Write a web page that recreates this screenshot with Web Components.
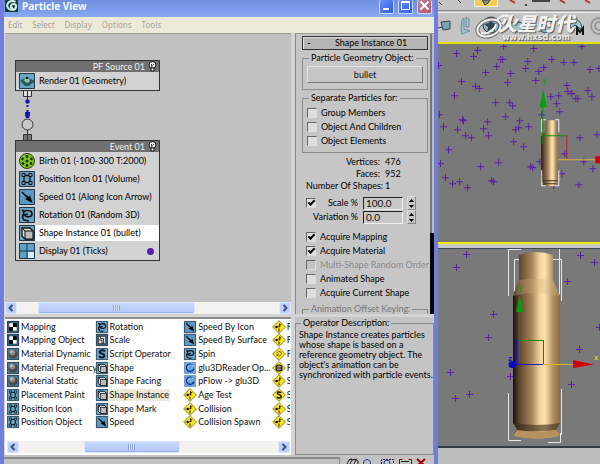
<!DOCTYPE html>
<html lang="en">
<head>
<meta charset="utf-8">
<title>Particle View</title>
<style>
  html, body { height: 100%; }

  body {
    margin: 0;
    overflow: hidden;
    background: #c2c2c2;
    color: #000;
    font: 9px/12px Lato, sans-serif;
  }
</style>
</head>
<body>
<particle-app></particle-app>

<script>
const ICONS = {
  teapot: `<path fill="#69a3c8" d="M0 0h16v16H0z"/><path fill="#255b5c" d="M3 7c0-2 10-2 10 0 3-1 3 3-1 4-2 3-6 3-8 0C1 9 1 6 3 7z"/><path fill="#91c5b4" d="M5 7c2-2 5-1 6 0-1 3-4 4-6 0z"/><path d="M7 4h2v2H7z"/>`,
  birth: `<circle cx="8" cy="8" r="7.5" fill="#7fc41c" stroke="#26400c"/><g fill="#183804"><circle cx="8" cy="8" r="1.5"/><circle cx="8" cy="3.5" r="1.4"/><circle cx="8" cy="12.5" r="1.4"/><circle cx="3.5" cy="6" r="1.4"/><circle cx="12.5" cy="6" r="1.4"/><circle cx="4" cy="10.5" r="1.4"/><circle cx="12" cy="10.5" r="1.4"/></g>`,
  position: `<path fill="#69a3c8" d="M0 0h16v16H0z"/><path fill="none" stroke="#111" stroke-width="1.3" d="M5 4v8M11 4v8M4 4.500h8M4 11.500h8"/><path fill="#69a3c8" stroke="#111" d="M3 2.500h3v3H3zM10 2.500h3v3h-3zM3 10.500h3v3H3zM10 10.500h3v3h-3z"/>`,
  speed: `<path fill="#5d98c0" d="M0 0h16v16H0z"/><path stroke="#111" stroke-width="1.600" d="M3 3l5 5"/><path d="M13.500 14L6 10l2-1-1-3 3 2 1-2z"/>`,
  rotation: `<path fill="#69a3c8" d="M0 0h16v16H0z"/><path fill="none" stroke="#111" stroke-width="1.600" d="M4 6c2-4 9-3 9 1 0 3-5 4-8 1l4-1M5 6c-2 3-2 5 0 7l5 1M3 3l3 2"/>`,
  shape: `<path fill="#69a3c8" d="M0 0h16v16H0z"/><path fill="#ddd" stroke="#111" stroke-width="1.300" d="M3 3h8l3 3v8H6l-3-3z"/><path fill="#bbb" stroke="#111" d="M6 6h8v8H6zM3 3l3 3"/>`,
  display: `<path fill="#5f9fc8" d="M0 0h16v16H0z"/><path fill="#d7edf8" d="M9 9h6v6H9z"/><path stroke="#183950" d="M8 0v16M0 8h16"/>`,
  mapping: `<path fill="#335d75" d="M0 0h16v16H0z"/><path d="M3 3h10v10H3z"/><path fill="#fff" d="M3 3h5v5H3zM8 8h5v5H8z"/>`,
  material: `<path fill="#4b7995" d="M0 0h16v16H0z"/><circle cx="8" cy="8" r="6" fill="#484848"/><circle cx="7" cy="6" r="4" fill="#888"/><circle cx="6" cy="5" r="2" fill="#bbb"/>`,
  scale: `<path fill="#456f88" d="M0 0h16v16H0z"/><path fill="#ddd" stroke="#111" d="M3 3h10v10H3z"/><path stroke="#111" fill="none" d="M3 8h5v5M6 3v3h4v7"/>`,
  script: `<path fill="#69a3c8" d="M0 0h16v16H0z"/><path fill="none" stroke="#111" stroke-width="2.500" d="M12 4.500C9 2 4 3 5 6c1 2 6 1 6 4 0 4-5 3-7 1"/>`,
  glu: `<path fill="#6ca3dc" d="M0 0h16v16H0z"/><path fill="none" stroke="#1b2b8c" stroke-width="2" d="M11 4C6 1 2 6 4 10c2 4 8 3 9-1"/><path fill="none" stroke="#dceaff" d="M12 5C8 2 4 6 5 9"/>`,
  test: `<path fill="#ffe51e" stroke="#6f6200" d="M8-.500L16.500 8 8 16.500-.500 8z"/><path fill="none" stroke="#111" stroke-width="1.300" d="M8 10v4M2 8h5M9 3L8 8l2-1M9 5h2"/><path d="M4 6l3 2-3 2z"/>`,
  spinTest: `<path fill="#ffe51e" stroke="#6f6200" d="M8-.500L16.500 8 8 16.500-.500 8z"/><path fill="none" stroke="#654" stroke-width="1.300" d="M5 7c2-4 7-2 6 1s-5 4-6 1l3-1"/>`,
  goTest: `<path fill="#ffe51e" stroke="#6f6200" d="M8-.500L16.500 8 8 16.500-.500 8z"/><circle cx="8" cy="8" r="4" fill="#999" stroke="#111" stroke-width="1.500"/><path stroke="#111" d="M4 8h8"/>`,
  scriptTest: `<path fill="#ffe51e" stroke="#6f6200" d="M8-.500L16.500 8 8 16.500-.500 8z"/><path fill="none" stroke="#111" stroke-width="2" d="M11 5C8 3 5 4 6 6c1 2 5 1 5 4-1 3-4 2-6 1"/>`
};

class OpIcon extends HTMLElement {
  connectedCallback() {
    const kind = this.getAttribute("kind");
    const round = /birth|glu|test/i.test(kind);
    this.attachShadow({ mode: "open" }).innerHTML = /* html */`
    <style>
      :host { display: block; flex: none; width: var(--icon, 12px); height: var(--icon, 12px); }
      svg { display: block; width: 100%; height: 100%; overflow: visible; }
    </style>
    <svg viewBox="0 0 16 16" aria-hidden="true">${ICONS[kind]}
      ${round ? "" : `<path fill="none" stroke="#23384a" d="M.5.5h15v15H.5z"/>`}
    </svg>`;
  }
}

class TitleBar extends HTMLElement {
  connectedCallback() {
    this.attachShadow({ mode: "open" }).innerHTML = /* html */`
    <style>
      :host {
        display: flex;
        flex: none;
        align-items: flex-start;
        gap: 4px;
        height: 17px;
        padding: 0 2px 0 1px;
        box-sizing: border-box;
        background: linear-gradient(#718fdd, #7c9ceb 60%, #8aaaf0);
        color: #f4f7ff;
      }
      .logo { width: 13px; height: 12px; }
      h1 { flex: 1; margin: 0; font: bold 10px/13px "Noto Sans", sans-serif; }
      button {
        width: 15px;
        height: 14px;
        padding: 0;
        border: 1px solid #cbd8fb;
        border-top: 0;
        border-radius: 2px;
        background: linear-gradient(135deg, #6b92f5, #2d5be0);
      }
      button.close { background: linear-gradient(135deg, #c98795, #a8546a); }
      button svg { display: block; width: 13px; height: 13px; fill: none; stroke: #fff; }
    </style>
    <svg class="logo" viewBox="0 0 13 12"><path fill="#163f3a" d="M0 0h13v12H0z"/><path fill="none" stroke="#cfeee2" stroke-width="2" d="M10.500 2C6-1 1 3 2.500 7s8 3.500 8.500 0-4-4-5-1.500 1 2.500 2 2"/></svg>
    <h1><slot></slot></h1>
    <button aria-label="Minimize"><svg viewBox="0 0 13 13"><path stroke-width="2" d="M3 9h6"/></svg></button>
    <button aria-label="Maximize"><svg viewBox="0 0 13 13"><path d="M2.500 2.500h8v7h-8z"/><path stroke-width="2" d="M2 2h9"/></svg></button>
    <button class="close" aria-label="Close"><svg viewBox="0 0 13 13"><path stroke-width="2" d="M2.500 1.500l8 8M10.500 1.500l-8 8"/></svg></button>`;
  }
}

class MenuBar extends HTMLElement {
  connectedCallback() {
    const items = ["Edit", "Select", "Display", "Options", "Tools"];
    this.attachShadow({ mode: "open" }).innerHTML = /* html */`
    <style>
      :host {
        display: flex;
        flex: none;
        gap: 10px;
        height: 16px;
        box-sizing: border-box;
        padding: 0 4px;
        background: #ece9d8;
      }
      button {
        padding: 0;
        border: 0;
        background: none;
        color: #a9a696;
        font: 8px/14px "Noto Sans", sans-serif;
      }
    </style>
    ${items.map(item => `<button>${item}</button>`).join("")}`;
  }
}

class EventNode extends HTMLElement {
  connectedCallback() {
    this.attachShadow({ mode: "open" }).innerHTML = /* html */`
    <style>
      :host { display: block; border: 1px solid #333; background: #d2d2d2; }
      header {
        display: flex;
        justify-content: flex-end;
        align-items: center;
        gap: 3px;
        height: 11px;
        padding-right: 2px;
        background: #707070;
        color: #eee;
      }
      svg { width: 9px; height: 11px; }
    </style>
    <header>
      <span>${this.getAttribute("heading")}</span>
      <svg viewBox="0 0 9 11"><circle cx="4.500" cy="4" r="3.500" fill="#eee" stroke="#111"/><path fill="#fff" stroke="#111" d="M3 7h3v3H3z"/><path stroke="#333" d="M3 3l1 1v3M6 3L5 4"/></svg>
    </header>
    <slot></slot>`;
  }
}

class NodeRow extends HTMLElement {
  connectedCallback() {
    this.attachShadow({ mode: "open" }).innerHTML = /* html */`
    <style>
      :host { display: flex; align-items: center; height: 18px; padding-left: 3px; --icon: 16px; }
      span { flex: 1; height: 16px; padding-left: 4px; line-height: 16px; white-space: nowrap; }
      :host([selected]) span { background: #fff; }
      i { width: 7px; height: 7px; margin-right: 5px; border-radius: 50%; background: #5a1cb4; }
    </style>
    <op-icon kind="${this.getAttribute("kind")}"></op-icon>
    <span><slot></slot></span>
    ${this.hasAttribute("dot") ? "<i></i>" : ""}`;
  }
}

class ScrollStrip extends HTMLElement {
  connectedCallback() {
    this.attachShadow({ mode: "open" }).innerHTML = /* html */`
    <style>
      :host { display: flex; flex: none; height: 12px; background: #f3f2ee; }
      button {
        width: 12px;
        padding: 0;
        border: 1px solid #dce6fd;
        border-radius: 2px;
        background: #bdcffa;
      }
      button svg { display: block; width: 10px; height: 10px; fill: none; stroke: #3c5080; stroke-width: 2; }
      .track { flex: 1; display: flex; }
      .thumb {
        display: grid;
        place-items: center;
        width: var(--thumb);
        margin-left: var(--start);
        border: 1px solid #dce6fd;
        border-radius: 2px;
        box-sizing: border-box;
        background: linear-gradient(#c8d8fd, #b4c8f8);
        box-shadow: inset 0 -1px #98b0e8;
      }
      .thumb i { width: 7px; height: 6px; background: repeating-linear-gradient(90deg, #8ba5e0 0 1px, #dfe8ff 1px 2px); }
    </style>
    <button aria-label="Scroll left"><svg viewBox="0 0 10 10"><path d="M6.500 2L3.500 5l3 3"/></svg></button>
    <div class="track"><div class="thumb"><i></i></div></div>
    <button aria-label="Scroll right"><svg viewBox="0 0 10 10"><path d="M3.500 2l3 3-3 3"/></svg></button>`;
  }
}

class EventGraph extends HTMLElement {
  connectedCallback() {
    this.attachShadow({ mode: "open" }).innerHTML = /* html */`
    <style>
      :host { display: flex; flex-direction: column; min-height: 0; background: #c1c1c1; }
      .canvas { flex: 1; min-height: 0; padding: 27px 10px 0; overflow: hidden; box-shadow: inset 0 1px #999; }
      event-node { width: 143px; }
      .wire { display: block; width: 24px; height: 49px; }
      scroll-strip { --start: 8%; --thumb: 60%; }
    </style>
    <div class="canvas">
      <event-node heading="PF Source 01">
        <node-row kind="teapot">Render 01 (Geometry)</node-row>
      </event-node>
      <svg class="wire" viewBox="0 0 24 49">
        <path fill="#ddd" stroke="#333" d="M8.500 0v5.500h8V0"/>
        <path fill="#777" stroke="#333" d="M8.500 49v-5.500h8V49"/>
        <path stroke="#333" d="M12.500 0v9M12.500 39v10"/>
        <path stroke="#1515b0" stroke-width="2" stroke-dasharray="2 3" d="M12.500 9v14"/>
        <circle cx="12.500" cy="10.500" r="2.300" fill="#1515b0"/>
        <path fill="#1515b0" d="M10 21h5v3l-1 3h-3l-1-3z"/>
        <circle cx="12.500" cy="33.500" r="5.500" fill="#c8c8c8" stroke="#333"/>
      </svg>
      <event-node heading="Event 01">
        <node-row kind="birth">Birth 01 (-100-300 T:2000)</node-row>
        <node-row kind="position">Position Icon 01 (Volume)</node-row>
        <node-row kind="speed">Speed 01 (Along Icon Arrow)</node-row>
        <node-row kind="rotation">Rotation 01 (Random 3D)</node-row>
        <node-row kind="shape" selected>Shape Instance 01 (bullet)</node-row>
        <node-row kind="display" dot>Display 01 (Ticks)</node-row>
      </event-node>
    </div>
    <scroll-strip></scroll-strip>`;
  }
}

class GroupBox extends HTMLElement {
  connectedCallback() {
    this.attachShadow({ mode: "open" }).innerHTML = /* html */`
    <style>
      :host { display: block; }
      fieldset { height: 100%; min-width: 0; margin: 0; padding: var(--pad, 0 4px 5px); border: 1px solid #8a8a8a; box-sizing: border-box; }
      legend { margin-left: 2px; padding: 0 2px; white-space: nowrap; }
    </style>
    <fieldset><legend>${this.getAttribute("label")}</legend><slot></slot></fieldset>`;
  }
}

class CheckRow extends HTMLElement {
  connectedCallback() {
    const has = name => this.hasAttribute(name) ? name : "";
    const label = this.getAttribute("label");
    this.attachShadow({ mode: "open" }).innerHTML = /* html */`
    <style>
      :host { display: block; height: 14px; }
      label { display: flex; align-items: center; gap: 4px; height: 14px; white-space: nowrap; }
      input {
        appearance: none;
        flex: none;
        width: 10px;
        height: 10px;
        margin: 0;
        border: 1px solid;
        border-color: #666 #ddd #ddd #666;
        background: #dedede;
      }
      input:checked::before {
        content: "";
        display: block;
        width: 5px;
        height: 2px;
        margin: 1px 0 0 1px;
        border: solid #000;
        border-width: 0 0 2px 2px;
        rotate: -45deg;
      }
      input:disabled { background: #c3c3c3; }
      input:disabled + span { color: #8b8b8b; }
    </style>
    <label><input type="checkbox" ${label ? `aria-label="${label}"` : ""} ${has("checked")} ${has("disabled")}><span><slot></slot></span></label>`;
  }
}

class SpinField extends HTMLElement {
  connectedCallback() {
    this.attachShadow({ mode: "open" }).innerHTML = /* html */`
    <style>
      :host { display: flex; justify-content: flex-end; align-items: center; flex: 1; height: 14px; }
      label { margin-right: 5px; }
      input {
        width: 40px;
        height: 13px;
        box-sizing: border-box;
        padding: 0 2px;
        border: 1px solid;
        border-color: #222 #eee #eee #222;
        border-radius: 0;
        background: #c8c8c8;
        color: #111;
        font: inherit;
        font-size: 10px;
      }
      div { display: grid; margin-left: 4px; border: 1px solid #999; border-color: #ddd #888 #888 #ddd; }
      button { display: grid; place-items: center; width: 7px; height: 6px; padding: 0; border: 0; background: none; }
      svg { width: 5px; height: 3px; }
    </style>
    <label for="value">${this.getAttribute("label")}</label>
    <input id="value" value="${this.getAttribute("value")}">
    <div>
      <button aria-label="Increase"><svg viewBox="0 0 5 3"><path d="M0 3L2.500 0 5 3z"/></svg></button>
      <button aria-label="Decrease"><svg viewBox="0 0 5 3"><path d="M0 0l2.500 3L5 0z"/></svg></button>
    </div>`;
  }
}

class ParamPanel extends HTMLElement {
  connectedCallback() {
    this.attachShadow({ mode: "open" }).innerHTML = /* html */`
    <style>
      :host {
        display: grid;
        grid-template-columns: minmax(0, 1fr) 4px;
        gap: 1px;
        min-height: 0;
        overflow: hidden;
        border-left: 1px solid #8a8a8a;
        border-top: 1px solid #999;
        box-sizing: border-box;
        background: #c6c6c6;
      }
      .rollout { min-height: 0; overflow: hidden; padding: 2px 1px 0 6px; }
      h2 {
        display: flex;
        height: 14px;
        margin: 0;
        border: 1px solid #333;
        box-sizing: border-box;
        background: #b5b5b5;
        box-shadow: inset 1px 1px #ddd;
        font: inherit;
        text-align: center;
      }
      h2 button { width: 12px; padding: 0; border: 0; background: none; font: inherit; font-weight: bold; }
      h2 span { flex: 1; }
      group-box { margin-top: 2px; }
      .pick {
        width: 100%;
        height: 17px;
        margin: 2px 0 1px;
        padding: 0;
        border: 1px solid;
        border-color: #e2e2e2 #777 #777 #e2e2e2;
        background: #c6c6c6;
        color: #111;
        font: inherit;
      }
      .separate { --pad: 2px 4px 4px; }
      dl {
        display: grid;
        grid-template-columns: 74px 1fr;
        column-gap: 5px;
        margin: 3px 0 4px 4px;
        white-space: nowrap;
      }
      dt { text-align: right; }
      dd { margin: 0; }
      .spin { display: flex; padding: 0 12px 0 4px; }
      .checks { padding: 6px 0 0 4px; }
      .keying { color: #777; margin-top: 3px; height: 30px; }
      .bar { display: flex; flex-direction: column; background: linear-gradient(90deg, #777 2px, #bbb 2px); }
      .bar i { margin-top: auto; height: 29%; background: #050505; }
    </style>
    <div class="rollout">
      <h2><button>-</button><span>Shape Instance 01</span></h2>
      <group-box label="Particle Geometry Object:"><button class="pick">bullet</button></group-box>
      <group-box class="separate" label="Separate Particles for:">
        <check-row>Group Members</check-row>
        <check-row>Object And Children</check-row>
        <check-row>Object Elements</check-row>
      </group-box>
      <dl>
        <dt>Vertices:</dt><dd>476</dd>
        <dt>Faces:</dt><dd>952</dd>
        <dt>Number Of Shapes:</dt><dd>1</dd>
      </dl>
      <div class="spin"><check-row label="Use scale" checked></check-row><spin-field label="Scale %" value="100.0"></spin-field></div>
      <div class="spin"><spin-field label="Variation %" value="0.0"></spin-field></div>
      <div class="checks">
        <check-row checked>Acquire Mapping</check-row>
        <check-row checked>Acquire Material</check-row>
        <check-row disabled>Multi-Shape Random Order</check-row>
        <check-row>Animated Shape</check-row>
        <check-row>Acquire Current Shape</check-row>
      </div>
      <group-box class="keying" label="Animation Offset Keying:"></group-box>
    </div>
    <div class="bar"><i></i></div>`;
  }
}

class OperatorDepot extends HTMLElement {
  connectedCallback() {
    const columns = [
      [["mapping", "Mapping"], ["mapping", "Mapping Object"], ["material", "Material Dynamic"], ["material", "Material Frequency"],
       ["material", "Material Static"], ["position", "Placement Paint"], ["position", "Position Icon"], ["position", "Position Object"]],
      [["rotation", "Rotation"], ["scale", "Scale"], ["script", "Script Operator"], ["shape", "Shape"],
       ["shape", "Shape Facing"], ["shape", "Shape Instance"], ["shape", "Shape Mark"], ["speed", "Speed"]],
      [["speed", "Speed By Icon"], ["speed", "Speed By Surface"], ["rotation", "Spin"], ["glu", "glu3DReader Op..."],
       ["glu", "pFlow -> glu3D"], ["test", "Age Test"], ["test", "Collision"], ["test", "Collision Spawn"]],
      [["test", "F"], ["test", "F"], ["spinTest", "F"], ["goTest", "F"],
       ["test", "S"], ["scriptTest", "S"], ["test", "S"], ["test", "S"]]
    ];
    const item = ([kind, name]) => `
      <button class="${name === "Shape Instance" ? "current" : ""}"><op-icon kind="${kind}"></op-icon><span>${name}</span></button>`;
    this.attachShadow({ mode: "open" }).innerHTML = /* html */`
    <style>
      :host {
        display: flex;
        flex-direction: column;
        min-height: 0;
        padding: 1px 1px 0 2px;
        border-top: 2px solid #8c8c8c;
        box-sizing: border-box;
        background: #fff;
      }
      .columns {
        flex: 1;
        display: grid;
        grid-template-columns: repeat(3, 31.3%) 1fr;
        min-height: 0;
        padding-bottom: 12px;
        overflow: hidden;
      }
      .columns div { display: flex; flex-direction: column; min-width: 0; min-height: 0; }
      button {
        flex: 1;
        display: flex;
        align-items: center;
        gap: 1px;
        min-height: 0;
        padding: 0;
        border: 0;
        background: none;
        color: #111;
        font: inherit;
        white-space: nowrap;
      }
      span { padding: 0 1px; }
      .current span { background: #ece9d8; }
      scroll-strip { --start: 25%; --thumb: 37%; margin-bottom: 2px; }
    </style>
    <div class="columns">${columns.map(col => `<div>${col.map(item).join("")}</div>`).join("")}</div>
    <scroll-strip></scroll-strip>`;
  }
}

class StatusStrip extends HTMLElement {
  connectedCallback() {
    this.attachShadow({ mode: "open" }).innerHTML = /* html */`
    <style>
      :host { display: flex; flex: none; justify-content: space-between; height: 9px; background: #c2c2c2; overflow: hidden; }
      div { width: 78%; margin-top: 2px; border: solid #888; border-width: 2px 1px 0 0; }
      svg { width: 84px; height: 9px; margin-right: 5px; }
    </style>
    <div></div>
    <svg viewBox="0 0 84 9" fill="none" stroke="#222">
      <path d="M2 9l2-4 3-1M5 9l2-4 3-1M9 9l2-4 2 1v4M4 5l2-1 3 1 3-1"/>
      <circle cx="22" cy="8" r="3.500" stroke="#2a3a90"/>
      <path stroke-dasharray="2 1" d="M36.500 9V4.500h12V9"/><circle cx="42" cy="8" r="3" stroke="#2a3a90"/>
      <path stroke="#900" d="M54.500 9V4.500h3M66.500 9V4.500h-3"/><path d="M56 6.500h8"/>
      <path stroke="#a00" stroke-width="2" d="M72 4l8 7M80 4l-8 7"/>
    </svg>`;
  }
}

class ParticleWindow extends HTMLElement {
  connectedCallback() {
    this.attachShadow({ mode: "open" }).innerHTML = /* html */`
    <style>
      :host {
        display: flex;
        flex-direction: column;
        min-height: 0;
        border: solid #6f7ddc;
        border-width: 0 4px;
        box-sizing: border-box;
      }
      main {
        flex: 1;
        display: grid;
        grid-template: minmax(0, 281fr) minmax(0, 138fr) / minmax(0, 286fr) minmax(0, 139fr);
        gap: 3px 4px;
        min-height: 0;
        padding-left: 1px;
        background: #d4d4d4;
      }
      .about { min-height: 0; --pad: 1px 0 0 3px; background: #c4c4c4; }
      p { margin: 0; line-height: 10px; }
      group-box { height: 100%; }
    </style>
    <title-bar>Particle View</title-bar>
    <menu-bar></menu-bar>
    <main>
      <event-graph></event-graph>
      <param-panel></param-panel>
      <operator-depot></operator-depot>
      <div class="about">
        <group-box label="Operator Description:">
          <p>Shape Instance creates particles whose shape is based on a reference geometry object. The object's animation can be synchronized with particle events.</p>
        </group-box>
      </div>
    </main>
    <status-strip></status-strip>`;
  }
}

class MainToolbar extends HTMLElement {
  connectedCallback() {
    this.attachShadow({ mode: "open" }).innerHTML = /* html */`
    <style>
      :host { display: block; position: relative; height: 42px; background: #c4c4c4; overflow: hidden; }
      .tools { display: block; width: 162px; height: 42px; }
      .mark {
        position: absolute;
        left: 60px;
        top: 13px;
        color: #f2f2f2;
        text-shadow: 1px 1px 1px #555;
        text-align: center;
      }
      strong { display: block; font: italic 900 19px/20px "Noto Sans CJK SC", sans-serif; }
      small { display: block; font: bold 8px/9px "DejaVu Sans", sans-serif; color: #e8e8e8; }
    </style>
    <svg class="tools" viewBox="438 0 162 42">
      <path fill="#f5cf55" stroke="#eee" d="M474.500-1h23v7.500h-23z"/>
      <path fill="#888" stroke="#444" d="M482 0h8l-2 3-3 2z"/>
      <path stroke="#444" fill="none" d="M439 2l3 3M458 0l3 3"/>
      <path stroke="#b33" stroke-width="2" d="M510 0l5 3M560 0l5 3M585 0l5 3"/>
      <path stroke="#444" stroke-width="2" d="M532 1h18M526 4v2"/>
      <path stroke="#8c8c8c" d="M438 10.500h162"/><path stroke="#eee" d="M438 12.500h162"/>
      <path fill="#78a5a8" stroke="#345" d="M441 22l9-1v8l-7 1zM438 28l5-1"/>
      <path fill="#9cc6ca" stroke="#579" stroke-width=".7" d="M461 30l1-10 2-2v11l6 2-8 3zM466 27V17l3 2v8z"/>
      <circle cx="491" cy="25" r="8" fill="#8ab8bb" stroke="#233"/>
      <path fill="#345" d="M491 18l2 5 5 1-4 3 1 5-4-3-4 3 1-5-4-3 5-1z"/>
      <ellipse cx="517" cy="27" rx="8" ry="5" fill="#9cc6ca" stroke="#345"/>
      <circle cx="546" cy="26" r="7" fill="#8cb9c0" stroke="#345"/>
      <path fill="#9cd0d5" stroke="#345" d="M568 30c0-14 14-14 14 0l-7-5z"/>
      <path fill="none" stroke="#111" stroke-width="2" d="M577 35v-7l3 4 3-4v7"/>
      <g fill="none" stroke="#999" stroke-width="2"><circle cx="599" cy="26" r="8"/><circle cx="599" cy="26" r="4"/></g>
      <ellipse cx="489" cy="28" rx="12" ry="8" transform="rotate(-20 489 28)" fill="none" stroke="#666" stroke-width="4"/>
      <g fill="none" stroke="#f3f3f3" stroke-width="2"><ellipse cx="489" cy="28" rx="12" ry="8" transform="rotate(-20 489 28)"/><path d="M497 20c3-4 8-5 12-4M481 33c6 2 14-3 15-9"/></g>
    </svg>
    <div class="mark"><strong>火星时代</strong><small>www.hxsd.com</small></div>`;
  }
}

// Particle ticks as [x, y] in scene coordinates
const TOP_TICKS = [
  [456,53],[477,50],[473,56],[503,46],[533,48],[581,46],[500,59],[502,59],[496,66],[485,72],[510,73],[527,61],
  [525,68],[543,67],[538,71],[535,80],[551,59],[563,62],[573,62],[589,69],[598,68],[461,81],[475,86],[479,88],
  [454,95],[507,82],[495,102],[509,102],[512,105],[505,116],[550,96],[558,95],[566,85],[567,91],[571,93],
  [575,98],[577,98],[556,103],[559,111],[587,90],[591,96],[541,114],[439,114],[487,121],[519,120],[443,126],
  [457,129],[462,119],[463,120],[483,128],[488,135],[465,135],[471,137],[518,127],[515,129],[528,126],[513,141],
  [523,146],[448,149],[440,163],[480,166],[498,162],[530,166],[532,167],[539,161],[491,180],[493,181],[445,177],
  [452,183],[459,181],[467,187],[564,153],[579,137],[596,134],[583,161],[592,168],[561,173],[578,184],[553,185],[438,65]
];
const BOTTOM_TICKS = [
  [466,253],[456,266],[493,313],[488,336],[580,254],[594,261],[567,280],[599,326],[579,348],[450,371],
  [455,397],[469,393],[510,375],[571,383]
];
const ticks = list => `<path stroke="#5a20a8" d="${list.map(([x, y]) => `M${x - 3} ${y + .5}h7M${x + .5} ${y - 3}v7`).join("")}"/>`;
const brass = /* html */`
  <linearGradient id="brass">
    <stop offset="0" stop-color="#1c120a"/><stop offset=".14" stop-color="#5f4830"/>
    <stop offset=".4" stop-color="#a88658"/><stop offset=".58" stop-color="#f3d6a2"/>
    <stop offset=".68" stop-color="#fbe1ae"/><stop offset=".85" stop-color="#b39061"/><stop offset="1" stop-color="#8a6c43"/>
  </linearGradient>`;

const SCENES = {
  top: {
    box: "438 44 162 197",
    art: `${ticks(TOP_TICKS)}
      <g fill="url(#brass)">
        <path d="M545 120h11v11l2 5v44l-1 3v3h-14v-3l-2-3v-44l4-5z"/>
      </g>
      <path stroke="#44331f" d="M542 180.500h15M543 183.500h13"/>
      <path fill="none" stroke="#eee" d="M541.500 132v-12.500h4M555 119.500h3.500V132M541.500 170v15.500h4M555 185.500h3.500V170"/>
      <path fill="none" stroke="#0a9010" d="M542.500 144v-40M543 135.500h23"/>
      <path fill="#00a010" d="M543 89l3.500 18h-7z"/>
      <path stroke="#c02020" d="M566.500 135v24"/><path stroke="#d8b840" d="M558 159.500h37"/>
      <path fill="#d00000" d="M595 156h5v7h-5z"/>
      <text x="542" y="83" fill="#1a9a1a">y</text>`
  },
  bottom: {
    box: "438 248 162 198",
    art: `${ticks(BOTTOM_TICKS)}
      <path fill="none" stroke="#e8e8e8" d="M508.500 295v-46.500H521M514.500 290v-31.500h5M559.500 248v45M553 258.500h8.500V300M508.500 392v47.500H521M561.500 388v46M560.500 432v9.500H548"/>
      <path fill="url(#brass)" d="M519 254q17-6 34 0v25l7 16v127l-4 6h1l3 6c-3 4-45 5-47 0l4-6-4-6V295l6-16z"/>
      <path fill="#d8b480" opacity=".3" d="M519 279q17-2 34 0l7 16q-23-6-47 0z"/>
      <path fill="#3a2a18" opacity=".6" d="M514 422q23 4 46 0l-4 7q-20 3-38 0z"/>
      <path fill="#b8925e" d="M517 429q20 3 39 0l4 5c-3 4-45 5-47 0z"/>
      <path fill="none" stroke="#0a9010" d="M519.500 310v52M519 339.500h24"/>
      <path fill="#00a010" d="M519.500 294l3.500 17h-7z"/>
      <path stroke="#d02020" d="M543.500 339v24"/>
      <path fill="none" stroke="#1515c0" d="M516.500 338v25.500H543"/>
      <path stroke="#d8b820" d="M543 363.500h31"/><path fill="#d00000" d="M573 359l21 4.500-21 3.500z"/>
      <circle cx="512" cy="363.500" r="3.500" fill="#0808d0"/>
      <text x="518" y="289" fill="#1a9a1a">y</text>
      <text x="508" y="360" fill="#1515c0">z</text>
      <text x="594" y="359" fill="#d8d020">x</text>`
  }
};

class SceneView extends HTMLElement {
  connectedCallback() {
    const scene = SCENES[this.getAttribute("scene")];
    this.attachShadow({ mode: "open" }).innerHTML = /* html */`
    <style>
      :host { display: block; min-height: 0; background: #797979; overflow: hidden; }
      svg { display: block; width: 100%; height: 100%; }
      text { font: bold 8px "Liberation Sans", sans-serif; }
    </style>
    <svg viewBox="${scene.box}" preserveAspectRatio="xMinYMin slice"><defs>${brass}</defs>${scene.art}</svg>`;
  }
}

class ParticleApp extends HTMLElement {
  connectedCallback() {
    this.attachShadow({ mode: "open" }).innerHTML = /* html */`
    <style>
      :host { display: grid; grid-template-columns: minmax(0, 73fr) minmax(0, 27fr); height: 100vh; }
      .views { display: flex; flex-direction: column; min-height: 0; }
      scene-view { flex: 1; border-top: 2px solid #e6e000; }
      scene-view[scene="bottom"] { border-top: 1px solid #3c4a55; }
      .split { height: 4px; border-top: 2px solid #f0ea10; background: #c8c8c8; }
      footer { height: 16px; border-top: 2px solid #333b40; background: #bdbdbd; }
    </style>
    <particle-window></particle-window>
    <div class="views">
      <main-toolbar></main-toolbar>
      <scene-view scene="top"></scene-view>
      <div class="split"></div>
      <scene-view scene="bottom"></scene-view>
      <footer></footer>
    </div>`;
  }
}

customElements.define("op-icon", OpIcon);
customElements.define("title-bar", TitleBar);
customElements.define("menu-bar", MenuBar);
customElements.define("event-node", EventNode);
customElements.define("node-row", NodeRow);
customElements.define("scroll-strip", ScrollStrip);
customElements.define("event-graph", EventGraph);
customElements.define("group-box", GroupBox);
customElements.define("check-row", CheckRow);
customElements.define("spin-field", SpinField);
customElements.define("param-panel", ParamPanel);
customElements.define("operator-depot", OperatorDepot);
customElements.define("status-strip", StatusStrip);
customElements.define("particle-window", ParticleWindow);
customElements.define("main-toolbar", MainToolbar);
customElements.define("scene-view", SceneView);
customElements.define("particle-app", ParticleApp);
</script>
</body>
</html>
